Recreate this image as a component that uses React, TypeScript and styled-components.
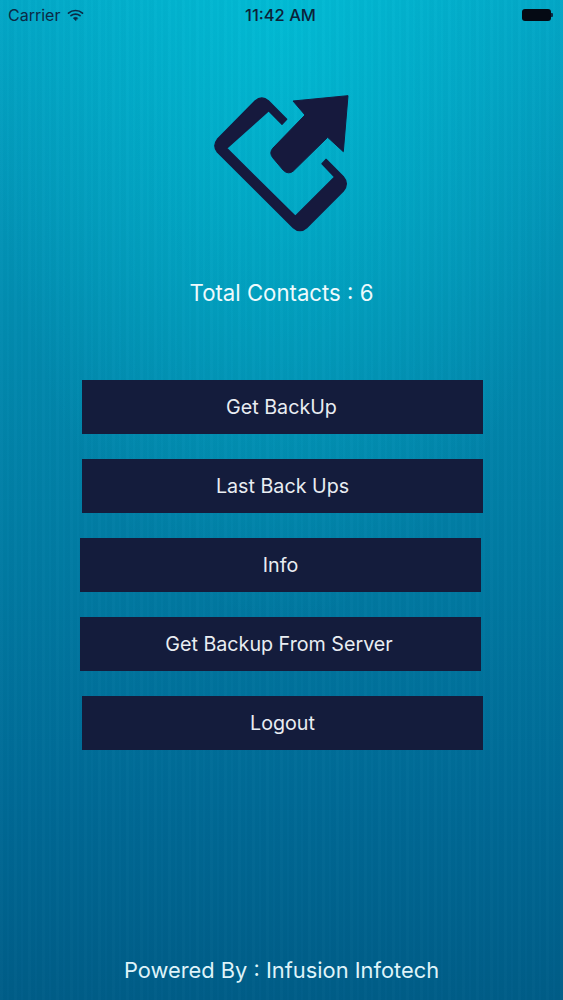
import React from "react";
import styled, { createGlobalStyle } from "styled-components";

const Global = createGlobalStyle`
  html, body { margin: 0; padding: 0; }
  body { font-family: Inter, "Liberation Sans", sans-serif; }
`;

const Screen = styled.div`
  position: relative;
  width: 563px;
  height: 1000px;
  overflow: hidden;
  display: flex;
  flex-direction: column;
  align-items: center;
  background:
    repeating-linear-gradient(90deg, rgba(255,255,255,0.012) 0 3px, rgba(0,0,0,0.012) 3px 7px, rgba(255,255,255,0.008) 7px 9px, rgba(0,0,0,0.015) 9px 14px),
    radial-gradient(ellipse 300px 620px at 50% 0%, rgba(0,205,225,0.55) 0%, rgba(0,205,225,0) 100%),
    linear-gradient(180deg, #03a6c6 0%, #028cb0 32%, #006a96 80%, #005d88 100%);
`;

const StatusBar = styled.div`
  width: 100%;
  height: 29px;
  box-sizing: border-box;
  padding: 0 10px 0 8px;
  display: grid;
  grid-template-columns: 1fr auto 1fr;
  align-items: center;
  color: #0b2a45;
  font-size: 16px;
`;

const StatusLeft = styled.div`
  display: flex;
  align-items: center;
  gap: 7px;
`;

const Clock = styled.div`
  font-weight: 500;
  font-size: 16.5px;
  color: #0c2238;
`;

const Battery = styled.div`
  justify-self: end;
  display: flex;
  align-items: center;
`;

const BatteryBody = styled.div`
  width: 29px;
  height: 12px;
  border-radius: 3px;
  background: #050a14;
`;

const BatteryTip = styled.div`
  width: 2px;
  height: 4px;
  background: #0b2a45;
  border-radius: 0 1px 1px 0;
`;

const Logo = styled.svg`
  display: block;
  width: 160px;
  height: 155px;
  margin: 56px 0 0 -4px;
`;

const TotalLabel = styled.div`
  margin-top: 39px;
  height: 28px;
  line-height: 28px;
  font-size: 22.2px;
  font-weight: 400;
  color: #eefafd;
`;

const ButtonList = styled.div`
  margin-top: 73px;
  width: 100%;
  display: flex;
  flex-direction: column;
  gap: 25px;
`;

const ActionButton = styled.button<{ $left: number; $inset?: number }>`
  width: 401px;
  height: 54px;
  margin-left: ${(p) => p.$left}px;
  padding: 0 ${(p) => p.$inset ?? 0}px 0 0;
  border: 0;
  background: #141c3c;
  color: #e9edf2;
  font-family: inherit;
  font-size: 19.7px;
  font-weight: 400;
  text-align: center;
`;

const Footer = styled.div`
  position: absolute;
  left: 0;
  right: 0;
  top: 955px;
  height: 30px;
  line-height: 30px;
  text-align: center;
  font-size: 21.85px;
  font-weight: 400;
  color: #dff3f9;
`;

const buttons: { label: string; left: number; inset?: number }[] = [
  { label: "Get BackUp", left: 82, inset: 2 },
  { label: "Last Back Ups", left: 82 },
  { label: "Info", left: 80 },
  { label: "Get Backup From Server", left: 80, inset: 3 },
  { label: "Logout", left: 82 },
];

export default function App() {
  return (
    <Screen>
      <Global />
      <StatusBar>
        <StatusLeft>
          <span>Carrier</span>
          <svg width="17" height="12" viewBox="0 0 16 12" fill="none" stroke="#0b2a45" strokeWidth="1.7" strokeLinecap="round">
            <path d="M1 4.2C5 .6 11 .6 15 4.2" />
            <path d="M3.5 6.7C6 4.5 10 4.5 12.5 6.7" />
            <path d="M8 11.5 5.8 9.1C7 8 9 8 10.2 9.1Z" fill="#0b2a45" strokeWidth="0.6" />
          </svg>
        </StatusLeft>
        <Clock>11:42 AM</Clock>
        <Battery>
          <BatteryBody />
          <BatteryTip />
        </Battery>
      </StatusBar>
      <Logo viewBox="0 0 480 465" aria-hidden="true">
        <path
          fill="#16193d"
          stroke="#16193d"
          strokeWidth="4"
          strokeLinejoin="round"
          d="M260 103 205 47Q185 30 165 48L52 163Q37 182 52 201L280 428Q300 446 320 428L430 318Q448 296 430 275L378 223 366 236 404 276 286 394 80 190 206 77 246 118Z"
        />
        <path
          fill="#16193d"
          stroke="#16193d"
          strokeWidth="3"
          strokeLinejoin="round"
          d="M444 32 279 48 315 90 218 190Q207 204 218 218L250 256Q265 270 280 258L383 157 430 200Z"
        />
      </Logo>
      <TotalLabel>Total Contacts : 6</TotalLabel>
      <ButtonList>
        {buttons.map(({ label, left, inset }) => (
          <ActionButton key={label} $left={left} $inset={inset}>
            {label}
          </ActionButton>
        ))}
      </ButtonList>
      <Footer>Powered By : Infusion Infotech</Footer>
    </Screen>
  );
}
